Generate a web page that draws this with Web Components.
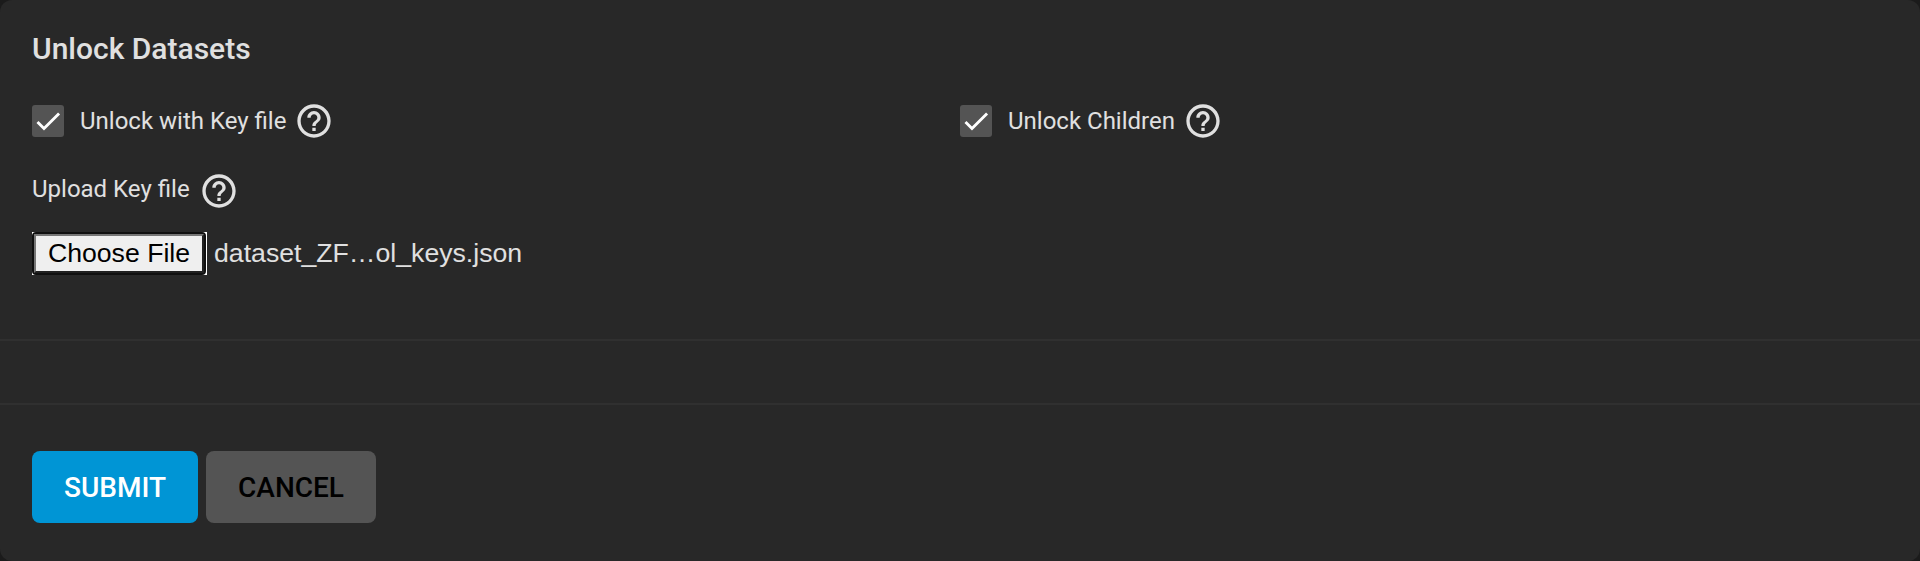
<!DOCTYPE html>
<html lang="en"><head><meta charset="utf-8"><title>Unlock Datasets</title>
<style>html,body{margin:0;background:#1b1b1b}</style></head><body>
<unlock-card></unlock-card>
<script>
const define=(name,html)=>customElements.define(name,class extends HTMLElement{
  constructor(){super();const t=document.createElement('template');t.innerHTML=html;
    this.attachShadow({mode:'open'}).append(t.content.cloneNode(true));}
});
define('help-icon',`<style>:host{display:block;width:40px;height:40px;flex:none}svg{display:block}</style>
<svg width="40" height="40" viewBox="0 0 24 24" fill="#e0e0e0"><path d="M11 18h2v-2h-2v2zm1-16C6.48 2 2 6.48 2 12s4.48 10 10 10 10-4.48 10-10S17.52 2 12 2zm0 18c-4.41 0-8-3.59-8-8s3.59-8 8-8 8 3.59 8 8-3.59 8-8 8zm0-14c-2.21 0-4 1.79-4 4h2c0-1.1.9-2 2-2s2 .9 2 2c0 2-3 1.75-3 5h2c0-2.25 3-2.5 3-5 0-2.21-1.79-4-4-4z"/></svg>`);
define('check-option',`<style>:host{display:flex;align-items:center;height:42px;font-size:24px;line-height:42px;white-space:nowrap}
.box{width:32px;height:32px;border-radius:3px;background:#545454;margin-right:16px;flex:none}svg{display:block}help-icon{margin-left:8px}</style>
<span class="box"><svg width="32" height="32" viewBox="0 0 24 24" fill="none" stroke="#fff" stroke-width="2.13"><path d="M4.1 12.7 9 17.6 20.3 6.3"/></svg></span><slot></slot><help-icon></help-icon>`);
define('file-picker',`<style>:host{display:flex;align-items:center;height:43px;font:26.67px "Liberation Sans",Arial,sans-serif}
.ring{box-sizing:border-box;width:175px;height:43px;background:#fff;padding:0 1px 0 0;flex:none}
.frame{box-sizing:border-box;height:43px;border:2px solid #101010;border-radius:4px;background:#101010}
.btn{box-sizing:border-box;height:39px;border:2px solid;border-color:#767676 #212121 #212121 #767676;background:#efefef;color:#000;line-height:35px;text-align:center;white-space:nowrap}
.name{margin-left:7px;line-height:43px;white-space:nowrap}</style>
<div class="ring"><div class="frame"><div class="btn">Choose File</div></div></div><div class="name"><slot></slot></div>`);
define('action-button',`<style>:host{display:block;box-sizing:border-box;width:170px;height:72px;border-radius:8px;background:#545454;color:#000;text-align:center;font-weight:500;font-size:28px;line-height:74px}
:host([primary]){width:166px;background:#0095d5;color:#fff}</style><slot></slot>`);
define('unlock-card',`<style>:host{display:block;box-sizing:border-box;height:561px;border-radius:12px;background:#282828;color:#e0e0e0;font-family:Roboto,sans-serif;overflow:hidden}
h1{margin:0;padding:30px 0 0 32px;font-size:30px;font-weight:500;line-height:38px}
.options{display:grid;grid-template-columns:928px 1fr;padding:32px 0 0 32px}
.upload{display:flex;align-items:center;height:42px;padding:28px 0 0 32px;font-size:24px}
.upload help-icon{margin-left:9px}.upload span{margin-top:-4px}
file-picker{margin:20px 0 0 32px}
.band{margin-top:64px;height:62px;border:solid #303030;border-width:2px 0}
.actions{display:flex;gap:8px;padding:46px 0 0 32px}</style>
<h1>Unlock Datasets</h1>
<div class="options"><check-option>Unlock with Key file</check-option><check-option>Unlock Children</check-option></div>
<div class="upload"><span>Upload Key file</span><help-icon></help-icon></div>
<file-picker>dataset_ZF…ol_keys.json</file-picker>
<div class="band"></div>
<div class="actions"><action-button primary>SUBMIT</action-button><action-button>CANCEL</action-button></div>`);
</script></body></html>
